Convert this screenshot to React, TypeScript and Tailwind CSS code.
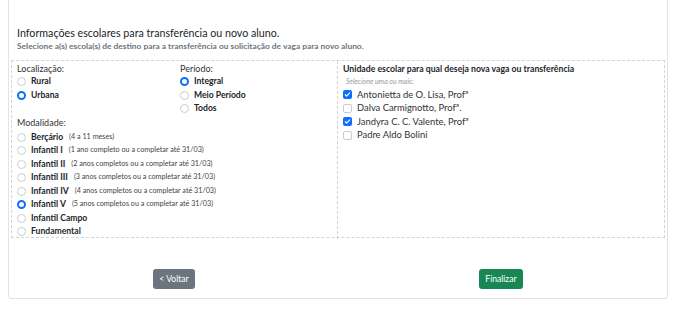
import React from "react";

const font = { fontFamily: 'Lato, "Open Sans", Arial, sans-serif' };

function Radio({ checked }: { checked?: boolean }) {
  return checked ? (
    <span className="inline-block w-[9px] h-[9px] rounded-full border-[2.5px] border-[#0d6efd] bg-white shrink-0" />
  ) : (
    <span className="inline-block w-[9px] h-[9px] rounded-full border border-[#c9ccd0] bg-white shrink-0" />
  );
}

function Check({ checked }: { checked?: boolean }) {
  return checked ? (
    <span className="inline-flex items-center justify-center w-[9px] h-[9px] rounded-[2px] bg-[#0d6efd] shrink-0">
      <svg width="7" height="7" viewBox="0 0 16 16">
        <path d="M3 8.5l3.2 3L13 4.5" fill="none" stroke="white" strokeWidth="2.6" strokeLinecap="round" strokeLinejoin="round" />
      </svg>
    </span>
  ) : (
    <span className="inline-block w-[9px] h-[9px] rounded-[2px] border border-[#c9ccd0] bg-white shrink-0" />
  );
}

function Option({ label, note, checked }: { label: string; note?: string; checked?: boolean }) {
  return (
    <div className="flex items-center gap-[5px] h-[13.5px]">
      <Radio checked={checked} />
      <span className="text-[8.6px] font-bold text-[#212529]">{label}</span>
      {note && <span className="text-[7.2px] text-[#444] ml-[1px]">{note}</span>}
    </div>
  );
}

const modalidades = [
  { label: "Berçário", note: "(4 a 11 meses)" },
  { label: "Infantil I", note: "(1 ano completo ou a completar até 31/03)" },
  { label: "Infantil II", note: "(2 anos completos ou a completar até 31/03)" },
  { label: "Infantil III", note: "(3 anos completos ou a completar até 31/03)" },
  { label: "Infantil IV", note: "(4 anos completos ou a completar até 31/03)" },
  { label: "Infantil V", note: "(5 anos completos ou a completar até 31/03)", checked: true },
  { label: "Infantil Campo" },
  { label: "Fundamental" },
];

const escolas = [
  { name: "Antonietta de O. Lisa, Profª", checked: true },
  { name: "Dalva Carmignotto, Profª." },
  { name: "Jandyra C. C. Valente, Profª", checked: true },
  { name: "Padre Aldo Bolini" },
];

export default function App() {
  return (
    <main className="w-[678px] h-[310px] bg-white overflow-hidden" style={font}>
      <div className="mx-[8px] mt-[-4px] w-[660px] h-[303px] border border-[#e3e3e3] rounded-[3px] bg-white px-[2px] pt-[28px]">
        <div className="px-[6px]">
          <h1 className="text-[10.7px] leading-[15px] text-[#212529]">
            Informações escolares para transferência ou novo aluno.
          </h1>
          <p className="text-[8.4px] leading-[12px] font-bold text-[#6c757d]">
            Selecione a(s) escola(s) de destino para a transferência ou solicitação de vaga para novo aluno.
          </p>
        </div>

        <div className="mt-[8px] grid grid-cols-[326px_1fr] border border-dashed border-[#d4d4d4] h-[178px]">
          <div className="border-r border-dashed border-[#d4d4d4] pl-[5px] pt-[1px]">
            <div className="grid grid-cols-[163px_1fr]">
              <div>
                <div className="text-[9px] leading-[13px] text-[#333]">Localização:</div>
                <Option label="Rural" />
                <Option label="Urbana" checked />
              </div>
              <div>
                <div className="text-[9px] leading-[13px] text-[#333]">Período:</div>
                <Option label="Integral" checked />
                <Option label="Meio Período" />
                <Option label="Todos" />
              </div>
            </div>
            <div className="text-[9px] leading-[13px] text-[#333] mb-[2px]">Modalidade:</div>
            {modalidades.map((m) => (
              <Option key={m.label} label={m.label} note={m.note} checked={m.checked} />
            ))}
          </div>

          <div className="pl-[5px] pt-[1px]">
            <div className="text-[8.7px] leading-[13px] font-bold text-[#212529]">
              Unidade escolar para qual deseja nova vaga ou transferência
            </div>
            <div className="text-[7px] leading-[12px] italic text-[#999] pl-[3px]">Selecione uma ou mais:</div>
            <div className="mt-[1px]">
              {escolas.map((e) => (
                <div key={e.name} className="flex items-center gap-[5px] h-[13.5px]">
                  <Check checked={e.checked} />
                  <span className="text-[9.4px] text-[#333]">{e.name}</span>
                </div>
              ))}
            </div>
          </div>
        </div>

        <div className="grid grid-cols-[326px_1fr] mt-[31px]">
          <div className="flex justify-center">
            <button className="h-[20px] px-[6px] rounded-[3px] bg-[#6c757d] text-white text-[8.6px]">
              &lt; Voltar
            </button>
          </div>
          <div className="flex justify-center">
            <button className="h-[20px] px-[6px] rounded-[3px] bg-[#198754] text-white text-[8.6px]">
              Finalizar
            </button>
          </div>
        </div>
      </div>
    </main>
  );
}
